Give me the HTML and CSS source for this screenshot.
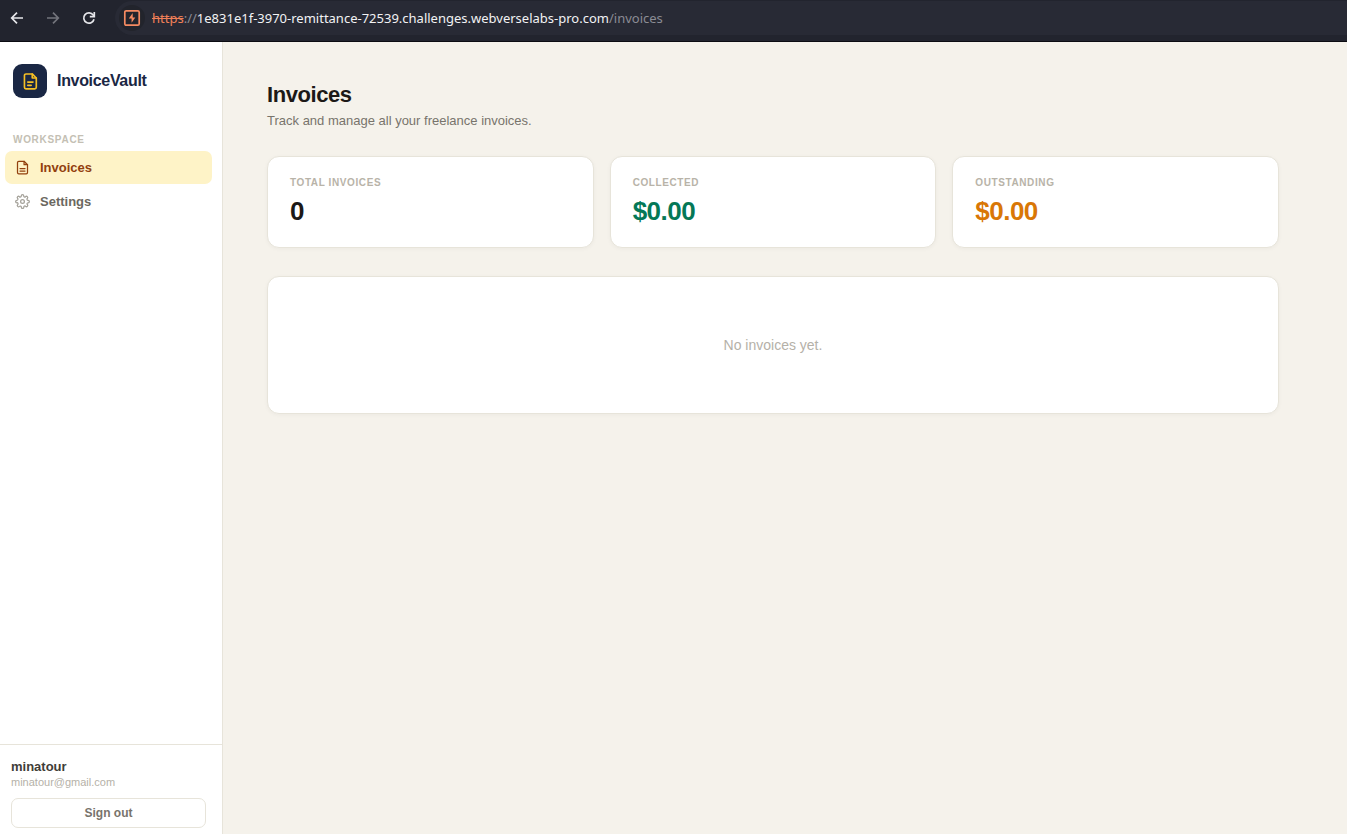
FILE: index.html
```html
<!DOCTYPE html>
<html lang="en">
<head>
<meta charset="utf-8">
<title>Invoices - InvoiceVault</title>
<link rel="stylesheet" href="styles.css">
</head>
<body>
<header class="toolbar">
  <nav class="toolbar-nav" aria-label="Browser">
    <button class="tool" type="button" aria-label="Back">
      <svg width="16" height="16" viewBox="0 0 16 16" fill="none" stroke="currentColor" stroke-width="1.7"><path d="M14 8H3M8 2.7 2.7 8 8 13.3"/></svg>
    </button>
    <button class="tool tool-off" type="button" aria-label="Forward">
      <svg width="16" height="16" viewBox="0 0 16 16" fill="none" stroke="currentColor" stroke-width="1.7"><path d="M2 8h11M8 2.7 13.3 8 8 13.3"/></svg>
    </button>
    <button class="tool" type="button" aria-label="Reload">
      <svg width="16" height="16" viewBox="0 0 16 16" fill="none" stroke="currentColor" stroke-width="1.7"><path d="M13 9.2A5.2 5.2 0 1 1 12.2 5L13.2 6.4"/><path d="M13.3 2v4.6H8.8"/></svg>
    </button>
  </nav>
  <div class="address">
    <span class="site">
      <svg width="18" height="18" viewBox="0 0 18 18" fill="none"><rect x="1.8" y="1.8" width="14.4" height="14.4" rx="1.4" stroke="#f58a62" stroke-width="1.7"/><path d="M9.7 4v4.4h2.6L8.6 13.8V9.6H5.8z" fill="#f58a62"/></svg>
    </span>
    <span class="url"><s class="scheme">https</s><span class="dim">://</span>1e831e1f-3970-remittance-72539.challenges.webverselabs-pro.com<span class="dim">/invoices</span></span>
  </div>
</header>
<div class="app">
  <aside class="sidebar">
    <div class="brand">
      <span class="brand-mark">
        <svg width="18" height="18" viewBox="0 0 24 24" fill="none" stroke="currentColor" stroke-width="2.2" stroke-linecap="round" stroke-linejoin="round"><path d="M15 2.6H6.6a2 2 0 0 0-2 2v15.8a2 2 0 0 0 2 2h11.8a2 2 0 0 0 2-2V8z"/><path d="M15 2.6V8h5.4M9 13.4h7M9 17.8h4.6"/></svg>
      </span>
      <span class="brand-name">InvoiceVault</span>
    </div>
    <nav class="menu" aria-labelledby="workspace">
      <h2 class="menu-title" id="workspace">WORKSPACE</h2>
      <a class="menu-item menu-item-active" href="#" aria-current="page">
        <svg width="15" height="15" viewBox="0 0 24 24" fill="none" stroke="currentColor" stroke-width="2" stroke-linecap="round" stroke-linejoin="round"><path d="M14.5 2H6a2 2 0 0 0-2 2v16a2 2 0 0 0 2 2h12a2 2 0 0 0 2-2V7.5z"/><path d="M14.5 2v5.5H20M8 13.6h8M8 17.6h8"/></svg>
        Invoices
      </a>
      <a class="menu-item" href="#">
        <svg width="15" height="15" viewBox="0 0 24 24" fill="none" stroke="currentColor" stroke-width="2" stroke-linecap="round" stroke-linejoin="round"><circle cx="12" cy="12" r="3"/><path d="M19.4 15a1.65 1.65 0 0 0 .33 1.82l.06.06a2 2 0 0 1-2.83 2.83l-.06-.06a1.65 1.65 0 0 0-2.8 1.17V21a2 2 0 0 1-4 0v-.09A1.65 1.65 0 0 0 9 19.4a1.65 1.65 0 0 0-1.82.33l-.06.06a2 2 0 0 1-2.83-2.83l.06-.06A1.65 1.65 0 0 0 3.18 14H3a2 2 0 0 1 0-4h.09A1.65 1.65 0 0 0 4.6 9a1.65 1.65 0 0 0-.33-1.82l-.06-.06a2 2 0 0 1 2.83-2.83l.06.06A1.65 1.65 0 0 0 9 4.68a1.65 1.65 0 0 0 1-1.51V3a2 2 0 0 1 4 0v.09a1.65 1.65 0 0 0 2.82 1.26l.06-.06a2 2 0 0 1 2.83 2.83l-.06.06A1.65 1.65 0 0 0 20.91 10H21a2 2 0 0 1 0 4h-.09a1.65 1.65 0 0 0-1.51 1z"/></svg>
        Settings
      </a>
    </nav>
    <div class="account">
      <div class="account-name">minatour</div>
      <div class="account-mail">minatour@gmail.com</div>
      <button class="sign-out" type="button">Sign out</button>
    </div>
  </aside>
  <main class="content">
    <h1 class="title">Invoices</h1>
    <p class="subtitle">Track and manage all your freelance invoices.</p>
    <section class="stats" aria-label="Summary">
      <div class="card stat"><div class="stat-label">TOTAL INVOICES</div><div class="stat-value">0</div></div>
      <div class="card stat"><div class="stat-label">COLLECTED</div><div class="stat-value stat-green">$0.00</div></div>
      <div class="card stat"><div class="stat-label">OUTSTANDING</div><div class="stat-value stat-amber">$0.00</div></div>
    </section>
    <section class="card empty">No invoices yet.</section>
  </main>
</div>
</body>
</html>
```
FILE: styles.css
```css
* { box-sizing: border-box; }
body {
  margin: 0;
  min-height: 100vh;
  display: flex;
  flex-direction: column;
  font-family: "Liberation Sans", Arial, sans-serif;
  font-size: 14px;
  color: #1c1917;
  background: #f5f2eb;
}
h1, h2, p { margin: 0; }
button { font-family: inherit; cursor: pointer; }
svg { display: block; flex: none; }

.toolbar {
  display: flex;
  align-items: flex-start;
  gap: 9px;
  height: 42px;
  padding-top: 1px;
  background: #22242e;
  border-bottom: 1px solid #0c0c12;
}
.toolbar-nav { display: flex; gap: 2px; }
.tool {
  display: flex;
  align-items: center;
  justify-content: center;
  width: 34px;
  height: 34px;
  padding: 0;
  border: 0;
  background: none;
  color: #e6e6ea;
}
.tool-off { color: #73747c; }
.address {
  flex: 1;
  display: flex;
  align-items: center;
  gap: 7px;
  height: 34px;
  padding-left: 4px;
  border-radius: 17px 0 0 17px;
  background: #282a35;
}
.site {
  display: flex;
  align-items: center;
  justify-content: center;
  width: 26px;
  height: 26px;
  border-radius: 50%;
  background: #22242c;
}
.url {
  font-family: "Noto Sans", sans-serif;
  font-size: 13px;
  line-height: 20px;
  white-space: nowrap;
  color: #f2f2f4;
}
.scheme { color: #f08058; }
.dim { color: #8b8c94; }

.app { flex: 1; display: flex; }
.sidebar {
  flex: none;
  display: flex;
  flex-direction: column;
  width: 223px;
  background: #fff;
  border-right: 1px solid #e7e4da;
}
.brand {
  display: flex;
  align-items: center;
  gap: 10px;
  padding: 22px 13px 32px;
}
.brand-mark {
  display: flex;
  align-items: center;
  justify-content: center;
  width: 34px;
  height: 34px;
  border-radius: 9px;
  background: #1a2744;
  color: #f5bf24;
}
.brand-name {
  font-size: 16px;
  font-weight: 700;
  letter-spacing: -0.02em;
  color: #1a2744;
}
.menu {
  flex: 1;
  display: flex;
  flex-direction: column;
  gap: 1px;
  padding: 0 10px 0 5px;
}
.menu-title {
  padding: 4px 8px 5px;
  font-size: 10px;
  line-height: 11px;
  font-weight: 700;
  letter-spacing: 0.07em;
  color: #c4bfb4;
}
.menu-item {
  display: flex;
  align-items: center;
  gap: 10px;
  height: 33px;
  padding: 0 10px;
  border-radius: 7px;
  font-size: 13px;
  font-weight: 700;
  text-decoration: none;
  color: #6b6860;
}
.menu-item svg { color: #a5a29a; }
.menu-item-active { background: #fef3c7; color: #92400e; }
.menu-item-active svg { color: inherit; }
.account {
  padding: 14px 16px 6px 11px;
  border-top: 1px solid #e7e4da;
}
.account-name {
  font-size: 13px;
  line-height: 16px;
  font-weight: 700;
  color: #3f3d38;
}
.account-mail {
  font-size: 11px;
  line-height: 15px;
  color: #b5b1a8;
}
.sign-out {
  width: 100%;
  height: 30px;
  margin-top: 8px;
  border: 1px solid #e7e4da;
  border-radius: 7px;
  background: #fff;
  font-size: 12px;
  font-weight: 700;
  color: #78736c;
}

.content {
  flex: 1;
  max-width: 1100px;
  padding: 40px 44px;
}
.title {
  font-size: 22px;
  line-height: 26px;
  font-weight: 700;
  letter-spacing: -0.02em;
}
.subtitle {
  margin: 5px 0 28px;
  font-size: 13px;
  line-height: 15px;
  color: #78746c;
}
.card {
  border: 1px solid #e7e4da;
  border-radius: 12px;
  background: #fff;
  box-shadow: 0 1px 4px rgba(0, 0, 0, 0.04);
}
.stats {
  display: grid;
  grid-template-columns: repeat(3, 1fr);
  gap: 16px;
  margin-bottom: 28px;
}
.stat { padding: 20px 22px 21px; }
.stat-label {
  margin-bottom: 7px;
  font-size: 10px;
  line-height: 12px;
  font-weight: 700;
  letter-spacing: 0.06em;
  color: #b8b3a8;
}
.stat-value {
  font-size: 26px;
  line-height: 30px;
  font-weight: 700;
  letter-spacing: -0.02em;
}
.stat-green { color: #047857; }
.stat-amber { color: #d97706; }
.empty {
  padding: 60px 24px;
  text-align: center;
  line-height: 16px;
  color: #b5b1a8;
}
```
